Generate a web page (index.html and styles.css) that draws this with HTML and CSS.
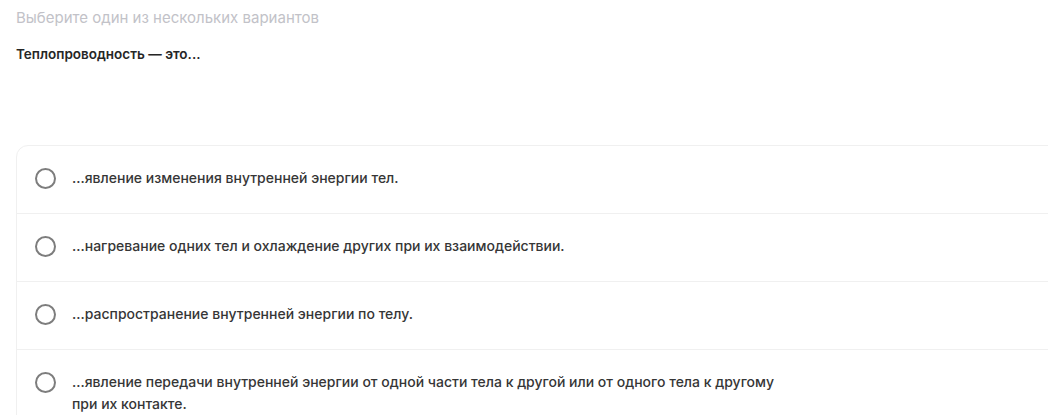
FILE: index.html
```html
<!DOCTYPE html>
<html lang="ru">
<head>
<meta charset="utf-8">
<link rel="stylesheet" href="styles.css">
</head>
<body>
<div class="page">
  <div class="hint">Выберите один из нескольких вариантов</div>
  <div class="question">Теплопроводность — это...</div>
  <div class="card">
    <div class="option">
      <span class="radio"></span>
      <span class="label">...явление изменения внутренней энергии тел.</span>
    </div>
    <div class="option">
      <span class="radio"></span>
      <span class="label">...нагревание одних тел и охлаждение других при их взаимодействии.</span>
    </div>
    <div class="option">
      <span class="radio"></span>
      <span class="label">...распространение внутренней энергии по телу.</span>
    </div>
    <div class="option">
      <span class="radio"></span>
      <span class="label">...явление передачи внутренней энергии от одной части тела к другой или от одного тела к другому при их контакте.</span>
    </div>
  </div>
</div>
</body>
</html>
```
FILE: styles.css
```css
html, body {
  margin: 0;
  padding: 0;
  background: #ffffff;
  overflow: hidden;
}
body {
  font-family: Inter, "Noto Sans", sans-serif;
  -webkit-font-smoothing: antialiased;
}
.page {
  padding: 8px 0 0 16px;
}
.hint {
  font-size: 15px;
  line-height: 20px;
  color: #c2c2c8;
  font-weight: 400;
}
.question {
  margin-top: 16px;
  font-size: 13.5px;
  line-height: 20px;
  font-weight: 600;
  color: #262626;
}
.card {
  margin-top: 81px;
  width: 1100px;
  border: 1px solid #f0f0f0;
  border-radius: 12px;
  background: #ffffff;
}
.option {
  display: flex;
  align-items: flex-start;
  padding: 21px 16px 24px 18px;
  border-top: 1px solid #f0f0f0;
}
.option:first-child {
  border-top: none;
}
.radio {
  flex: none;
  width: 17px;
  height: 17px;
  margin-top: 1px;
  border: 2px solid #7d7d7d;
  border-radius: 50%;
  margin-right: 16px;
}
.label {
  max-width: 712px;
  font-size: 14px;
  line-height: 22px;
  font-weight: 500;
  color: #363636;
}
```
